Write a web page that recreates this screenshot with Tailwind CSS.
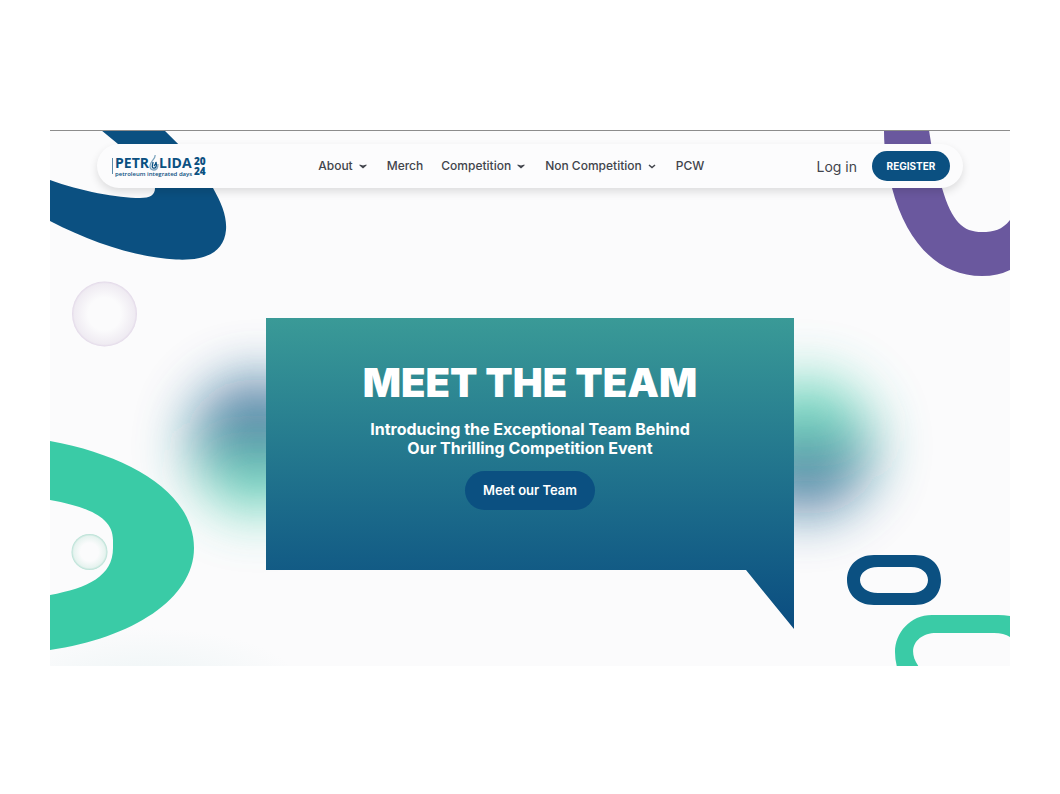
<!DOCTYPE html>
<html lang="en">
<head>
<meta charset="utf-8">
<meta name="viewport" content="width=device-width, initial-scale=1">
<title>Petrolida 2024</title>
<script src="https://cdn.jsdelivr.net/npm/@tailwindcss/browser@4"></script>
</head>
<body class="bg-white px-[50px] py-[130px] font-['Inter','Liberation_Sans',sans-serif]">
<div class="relative isolate overflow-hidden border-t border-[#8c8c8c] bg-[#fbfbfc] pb-[37px]">

  <!-- Background shapes -->
  <svg class="absolute inset-0 -z-10 h-full w-full" viewBox="50 131 960 535" preserveAspectRatio="none" aria-hidden="true">
    <defs>
      <linearGradient id="glowL" x1="0" y1="0" x2="0" y2="1"><stop offset=".4" stop-color="#0b5081"/><stop offset=".75" stop-color="#3acba6"/></linearGradient>
      <linearGradient id="glowR" x1="0" y1="0" x2="0" y2="1"><stop offset=".3" stop-color="#3acba6"/><stop offset=".65" stop-color="#0b5081"/></linearGradient>
      <radialGradient id="ringP"><stop offset=".5" stop-color="#fbfbfc"/><stop offset=".93" stop-color="#efebf2"/><stop offset="1" stop-color="#e2d8e8"/></radialGradient>
      <radialGradient id="ringG"><stop offset=".5" stop-color="#fbfbfc"/><stop offset=".88" stop-color="#e6f3ef"/><stop offset="1" stop-color="#b5dfd3"/></radialGradient>
      <radialGradient id="haze"><stop offset="0" stop-color="#eef5f6"/><stop offset="1" stop-color="#fbfbfc"/></radialGradient>
      <filter id="soft" x="-100%" y="-100%" width="300%" height="300%"><feGaussianBlur stdDeviation="28"/></filter>
    </defs>
    <ellipse cx="150" cy="684" rx="150" ry="56" fill="url(#haze)"/>
    <circle cx="258" cy="446" r="68" fill="url(#glowL)" opacity=".7" filter="url(#soft)"/>
    <circle cx="806" cy="446" r="68" fill="url(#glowR)" opacity=".7" filter="url(#soft)"/>
    <path fill="#0b5081" d="M101 130H164Q196 160 213 188C222 204 227 217 226 230C224 252 206 261 176 259.500C135 257 93 243 50 221V180C80 191 118 198 140 198C150 198 155 195 155 188C155 175 135 160 118 144Z"/>
    <path fill="#6a589e" d="M884 130C884 152 887 170 892 188C906 242 938 276 982 276Q998 276 1010 270V220C1002 230 994 232 982 232C963 232 952 222 942 188Q933 160 929 130Z"/>
    <path fill="#3acba6" d="M50 441C132 456 194 494 194 548C194 599 132 638 50 650V595C88 588 113 576 113 548V540C113 517 88 507 50 500Z"/>
    <circle cx="104.500" cy="314" r="32.500" fill="url(#ringP)"/>
    <circle cx="89.500" cy="552" r="18" fill="url(#ringG)"/>
    <path fill="#0b5081" fill-rule="evenodd" d="M874 555H915C932 555 941 566 941 580S932 605 915 605H874C857 605 847 594 847 580S857 555 874 555ZM878 567C867 567 860 573 860 580S867 593 878 593H911C922 593 928 587 928 580S922 567 911 567Z"/>
    <path fill="#3acba6" d="M1010 616Q1004 615 998 615H932C910 615 895 633 895 652Q895 660 897 667H919C905 648 918 633 936 633H994Q1004 633 1010 637Z"/>
  </svg>

  <header class="mx-[47px] mt-[13px] flex h-11 items-center justify-between rounded-full bg-[#fcfcfd] pr-[13px] pl-[15px] shadow-[0_4px_8px_rgba(0,0,0,0.12)]">
    <a href="#" class="flex w-[94px] items-center gap-0.5 font-['Open_Sans','Liberation_Sans',sans-serif] text-[#0b5081]" aria-label="Petrolida 2024">
      <span class="h-4 w-px bg-[#5d8cab]"></span>
      <span class="flex w-[77px] flex-col">
        <span class="flex items-center text-[14px] leading-[12px] font-bold">PETR<svg class="h-4 w-2.5 shrink-0" viewBox="0 0 10 16" fill="none" aria-hidden="true"><path d="M6 0C7 4 1 6 1 11C1 14 3 15 5 15C8 15 9 12 9 9" stroke="#7ba3bd" stroke-width="1.300"/><path d="M4 7C4 10 2 11 4 13C7 14 8 11 7 7C7 9 6 10 5 11" stroke="#0b5081" stroke-width="1.300"/></svg>LIDA</span>
        <span class="text-[6px] leading-[6px] font-semibold whitespace-nowrap">petroleum integrated days</span>
      </span>
      <span class="flex flex-col text-[10px] leading-[10px] font-extrabold"><span>20</span><span>24</span></span>
    </a>
    <nav class="flex items-center gap-[18px] text-[12px] leading-4 font-medium text-[#41444b]" aria-label="Main">
      <button class="flex items-center gap-1">About<svg class="size-3" viewBox="0 0 12 12" fill="#41444b" aria-hidden="true"><path d="M2.500 4.500L6 5.500L9.500 4.500V5.500L6 8.500L2.500 5.500Z"/></svg></button>
      <a href="#">Merch</a>
      <button class="flex items-center gap-1">Competition<svg class="size-3" viewBox="0 0 12 12" fill="#41444b" aria-hidden="true"><path d="M2.500 4.500L6 5.500L9.500 4.500V5.500L6 8.500L2.500 5.500Z"/></svg></button>
      <button class="flex items-center gap-1">Non Competition<svg class="size-3" viewBox="0 0 12 12" fill="none" stroke="#41444b" stroke-width="1.500" aria-hidden="true"><path d="M3 5L6 7.500L9 5"/></svg></button>
      <a href="#">PCW</a>
    </nav>
    <div class="flex items-center gap-[15px]">
      <a href="#" class="text-[14px] text-[#41444b]">Log in</a>
      <button class="h-[30px] w-[78px] rounded-full bg-[#0b5081] text-[10px] font-bold text-white">REGISTER</button>
    </div>
  </header>

  <main class="mx-auto mt-[130px] flex w-[55%] flex-col items-center bg-linear-to-b from-[#3a9a97] to-[#0b4c80] pt-[43px] pb-[119px] text-center text-white [clip-path:polygon(0_0,100%_0,100%_100%,calc(100%_-_48px)_calc(100%_-_59px),0_calc(100%_-_59px))]">
    <h1 class="text-[40px] leading-[44px] font-black whitespace-nowrap">MEET THE TEAM</h1>
    <p class="mt-[15px] text-[16px] leading-[19px] font-bold">Introducing the Exceptional Team Behind<br>Our Thrilling Competition Event</p>
    <button class="mt-[13px] h-[39px] w-[130px] rounded-full bg-[#0b5081] text-[13px] font-semibold">Meet our Team</button>
  </main>
</div>
</body>
</html>
